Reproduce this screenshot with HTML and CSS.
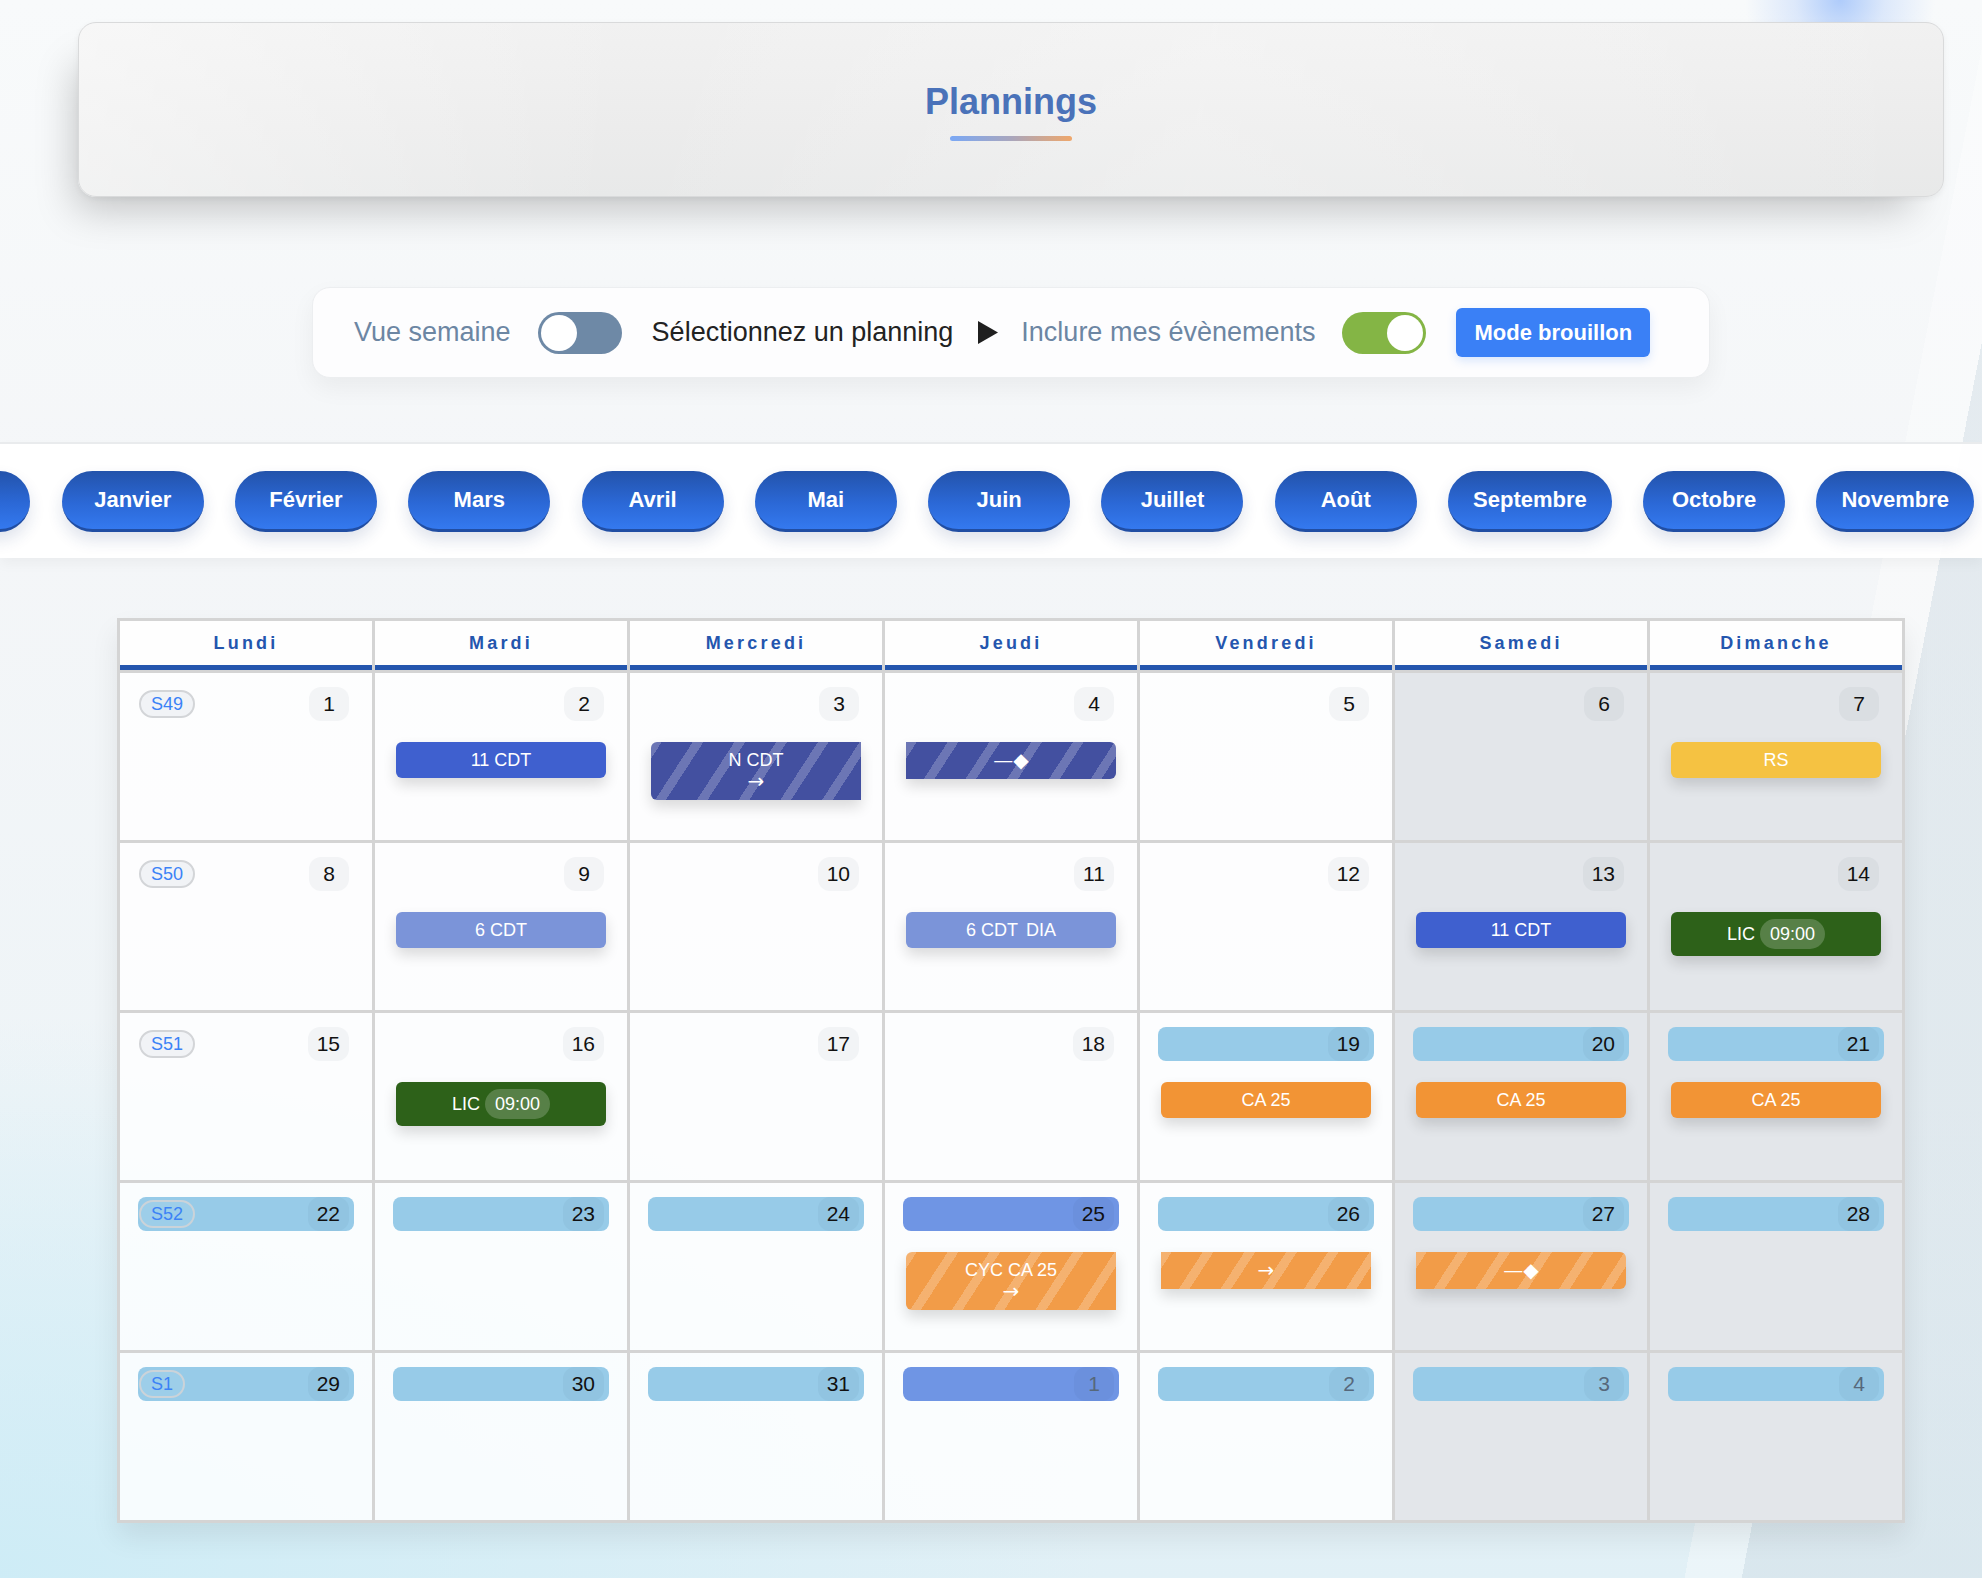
FILE: index.html
```html
<!DOCTYPE html>
<html lang="fr">
<head>
<meta charset="utf-8">
<title>Plannings</title>
<link rel="stylesheet" href="styles.css">
</head>
<body>
<div class="top">
  <header class="header-card">
    <h1 class="title">Plannings</h1>
    <div class="title-bar"></div>
  </header>
  <div class="controls">
    <span class="ctl-label">Vue semaine</span>
    <span class="toggle"></span>
    <span class="ctl-select">Sélectionnez un planning</span>
    <svg class="tri" width="20" height="23" viewBox="0 0 20 23"><polygon points="0,0 20,11.5 0,23" fill="#1f1f1f"/></svg>
    <span class="ctl-label">Inclure mes évènements</span>
    <span class="toggle on"></span>
    <button class="draft">Mode brouillon</button>
  </div>
</div>

<nav class="months">
  <div class="months-track">
    <span class="pill prev">Décembre</span>
    <span class="pill">Janvier</span>
    <span class="pill">Février</span>
    <span class="pill">Mars</span>
    <span class="pill">Avril</span>
    <span class="pill">Mai</span>
    <span class="pill">Juin</span>
    <span class="pill">Juillet</span>
    <span class="pill">Août</span>
    <span class="pill">Septembre</span>
    <span class="pill">Octobre</span>
    <span class="pill">Novembre</span>
    <span class="pill">Décembre</span>
  </div>
</nav>

<main class="cal-wrap">
  <div class="cal">
    <div class="dh">Lundi</div>
    <div class="dh">Mardi</div>
    <div class="dh">Mercredi</div>
    <div class="dh">Jeudi</div>
    <div class="dh">Vendredi</div>
    <div class="dh">Samedi</div>
    <div class="dh">Dimanche</div>

    <!-- Row 1 -->
    <div class="day"><div class="day-head"><span class="wk">S49</span><span class="num">1</span></div></div>
    <div class="day"><div class="day-head"><span class="num">2</span></div><div class="ev blue">11 CDT</div></div>
    <div class="day"><div class="day-head"><span class="num">3</span></div><div class="ev stripe-blue start">N CDT<br><span class="arr">→</span></div></div>
    <div class="day"><div class="day-head"><span class="num">4</span></div><div class="ev stripe-blue end"><span class="arr">—◆</span></div></div>
    <div class="day"><div class="day-head"><span class="num">5</span></div></div>
    <div class="day we"><div class="day-head"><span class="num">6</span></div></div>
    <div class="day we"><div class="day-head"><span class="num">7</span></div><div class="ev yellow">RS</div></div>

    <!-- Row 2 -->
    <div class="day"><div class="day-head"><span class="wk">S50</span><span class="num">8</span></div></div>
    <div class="day"><div class="day-head"><span class="num">9</span></div><div class="ev light">6 CDT</div></div>
    <div class="day"><div class="day-head"><span class="num">10</span></div></div>
    <div class="day"><div class="day-head"><span class="num">11</span></div><div class="ev light">6 CDT<span class="tag">DIA</span></div></div>
    <div class="day"><div class="day-head"><span class="num">12</span></div></div>
    <div class="day we"><div class="day-head"><span class="num">13</span></div><div class="ev blue">11 CDT</div></div>
    <div class="day we"><div class="day-head"><span class="num">14</span></div><div class="ev green lic">LIC<span class="time">09:00</span></div></div>

    <!-- Row 3 -->
    <div class="day"><div class="day-head"><span class="wk">S51</span><span class="num">15</span></div></div>
    <div class="day"><div class="day-head"><span class="num">16</span></div><div class="ev green lic">LIC<span class="time">09:00</span></div></div>
    <div class="day"><div class="day-head"><span class="num">17</span></div></div>
    <div class="day"><div class="day-head"><span class="num">18</span></div></div>
    <div class="day"><div class="day-head vac"><span class="num">19</span></div><div class="ev orange">CA 25</div></div>
    <div class="day we"><div class="day-head vac"><span class="num">20</span></div><div class="ev orange">CA 25</div></div>
    <div class="day we"><div class="day-head vac"><span class="num">21</span></div><div class="ev orange">CA 25</div></div>

    <!-- Row 4 -->
    <div class="day"><div class="day-head vac"><span class="wk">S52</span><span class="num">22</span></div></div>
    <div class="day"><div class="day-head vac"><span class="num">23</span></div></div>
    <div class="day"><div class="day-head vac"><span class="num">24</span></div></div>
    <div class="day"><div class="day-head hol"><span class="num">25</span></div><div class="ev stripe-orange start">CYC CA 25<br><span class="arr">→</span></div></div>
    <div class="day"><div class="day-head vac"><span class="num">26</span></div><div class="ev stripe-orange mid"><span class="arr">→</span></div></div>
    <div class="day we"><div class="day-head vac"><span class="num">27</span></div><div class="ev stripe-orange end"><span class="arr">—◆</span></div></div>
    <div class="day we"><div class="day-head vac"><span class="num">28</span></div></div>

    <!-- Row 5 -->
    <div class="day"><div class="day-head vac"><span class="wk">S1</span><span class="num">29</span></div></div>
    <div class="day"><div class="day-head vac"><span class="num">30</span></div></div>
    <div class="day"><div class="day-head vac"><span class="num">31</span></div></div>
    <div class="day"><div class="day-head hol"><span class="num other">1</span></div></div>
    <div class="day"><div class="day-head vac"><span class="num other">2</span></div></div>
    <div class="day we"><div class="day-head vac"><span class="num other">3</span></div></div>
    <div class="day we"><div class="day-head vac"><span class="num other">4</span></div></div>
  </div>
</main>
</body>
</html>
```
FILE: styles.css
```css
html, body {
  margin: 0;
  padding: 0;
}
body {
  width: 1982px;
  min-height: 1578px;
  overflow: hidden;
  font-family: "Liberation Sans", Arial, Helvetica, sans-serif;
  color: #111;
  background:
    radial-gradient(circle at 1840px 0px, rgba(150, 188, 250, 0.75) 0, rgba(170, 200, 250, 0.35) 45px, rgba(255, 255, 255, 0) 95px),
    linear-gradient(101deg, rgba(255,255,255,0) 0 87%, rgba(255,255,255,0.35) 87% 89.5%, rgba(208,220,228,0.45) 89.5% 100%),
    radial-gradient(ellipse 1100px 560px at 0% 100%, rgba(205, 236, 246, 0.95), rgba(205, 236, 246, 0) 100%),
    linear-gradient(180deg, #f8fafb 0%, #f4f6f8 35%, #eef4f7 70%, #e1f0f6 100%);
}

/* ---------- Top area ---------- */
.top {
  padding: 22px 38px 0 78px;
}
.header-card {
  box-sizing: border-box;
  height: 175px;
  border: 1px solid #d9dadb;
  border-radius: 18px;
  padding-top: 57px;
  text-align: center;
  background:
    linear-gradient(100deg, rgba(255,255,255,0.45) 0%, rgba(255,255,255,0) 30%, rgba(255,255,255,0.25) 60%, rgba(255,255,255,0) 100%),
    linear-gradient(180deg, #f1f1f1 0%, #ececec 60%, #e8e9e9 100%);
  box-shadow: -18px 28px 40px -16px rgba(0, 0, 0, 0.22), 0 2px 6px rgba(0, 0, 0, 0.05);
}
.title {
  margin: 0;
  font-size: 36px;
  line-height: 43px;
  font-weight: 700;
  color: #4a72b9;
}
.title-bar {
  width: 122px;
  height: 5px;
  margin: 13px auto 0;
  border-radius: 3px;
  background: linear-gradient(90deg, #7aa8f5 0%, #a9a6bd 50%, #efa76b 100%);
}

.controls {
  box-sizing: border-box;
  width: 1398px;
  height: 91px;
  margin: 90px auto 0;
  padding-left: 41px;
  display: flex;
  align-items: center;
  background: #fdfdfe;
  border: 1px solid #eceef0;
  border-radius: 18px;
  box-shadow: 0 10px 24px rgba(0, 0, 0, 0.05);
}
.ctl-label {
  font-size: 27px;
  color: #6c86a3;
}
.ctl-select {
  font-size: 27px;
  color: #222;
  margin-left: 30px;
}
.toggle {
  position: relative;
  width: 84px;
  height: 42px;
  border-radius: 21px;
  background: #6e89a6;
  margin-left: 27px;
  flex: none;
}
.toggle::after {
  content: "";
  position: absolute;
  top: 3px;
  left: 3px;
  width: 36px;
  height: 36px;
  border-radius: 50%;
  background: #fff;
}
.toggle.on {
  background: #84b545;
}
.toggle.on::after {
  left: 45px;
}
.tri {
  margin: 0 23px 0 25px;
  flex: none;
}
.draft {
  margin-left: 30px;
  height: 49px;
  padding: 0 18px;
  border: 0;
  border-radius: 6px;
  background: #3a80f6;
  color: #fff;
  font-family: inherit;
  font-size: 22px;
  font-weight: 700;
  box-shadow: 0 4px 10px rgba(58, 128, 246, 0.18);
}

/* ---------- Months ---------- */
.months {
  box-sizing: border-box;
  margin-top: 64px;
  height: 116px;
  background: rgba(255, 255, 255, 0.94);
  border-top: 2px solid #e9ebed;
  box-shadow: 0 6px 12px rgba(0, 0, 0, 0.04);
  overflow: hidden;
}
.months-track {
  display: flex;
  align-items: center;
  gap: 31.3px;
  height: 114px;
  margin-left: -138px;
}
.pill {
  flex: none;
  box-sizing: border-box;
  min-width: 142px;
  height: 61px;
  padding: 0 25px;
  border-radius: 31px;
  display: flex;
  align-items: center;
  justify-content: center;
  font-size: 22px;
  font-weight: 700;
  color: #fff;
  background: linear-gradient(180deg, #2353ab 0%, #2b68d6 55%, #3479ef 100%);
  border-bottom: 3px solid #214ea3;
  box-shadow: 0 8px 16px rgba(30, 60, 120, 0.14);
}
.pill.prev {
  padding-right: 37px;
}

/* ---------- Calendar ---------- */
.cal-wrap {
  margin-top: 60px;
  padding-left: 117px;
}
.cal {
  display: grid;
  grid-template-columns: repeat(7, 255px);
  width: 1788px;
  box-sizing: border-box;
  border-top: 3px solid #d4d4d4;
  border-left: 3px solid #d4d4d4;
  box-shadow: 0 14px 26px rgba(0, 0, 0, 0.08);
}
.dh {
  box-sizing: border-box;
  height: 52px;
  padding-bottom: 4px;
  border-right: 3px solid #d4d4d4;
  border-bottom: 3px solid #d4d4d4;
  background: #fefefe;
  box-shadow: inset 0 -5px 0 #2456ae;
  display: flex;
  align-items: center;
  justify-content: center;
  font-size: 18px;
  font-weight: 700;
  letter-spacing: 3.2px;
  color: #2456ae;
}
.day {
  box-sizing: border-box;
  height: 170px;
  padding: 14px 18px 0 18px;
  border-right: 3px solid #d4d4d4;
  border-bottom: 3px solid #d4d4d4;
  background: rgba(255, 255, 255, 0.82);
}
.day.we {
  background: #e3e6ea;
}
.day-head {
  display: flex;
  align-items: center;
  height: 34px;
  padding: 0 5px 0 1px;
  border-radius: 8px;
}
.day-head.vac {
  background: #97cbe8;
}
.day-head.hol {
  background: #6f95e4;
}
.wk {
  box-sizing: border-box;
  height: 28px;
  padding: 0 10px;
  border: 2px solid #d3d5d8;
  border-radius: 14px;
  background: #f1f3f6;
  color: #3b82f6;
  font-size: 18px;
  line-height: 24px;
}
.vac .wk {
  background: rgba(255, 255, 255, 0.06);
  border-color: #cbd3d9;
}
.num {
  margin-left: auto;
  box-sizing: border-box;
  min-width: 40px;
  height: 34px;
  padding: 0 9px;
  border-radius: 12px;
  background: rgba(30, 40, 60, 0.045);
  font-size: 21px;
  line-height: 34px;
  text-align: center;
  color: #111;
}
.num.other {
  color: #56687b;
}

.ev {
  margin: 21px 3px 0;
  padding: 7.5px 6px;
  border-radius: 6px;
  color: #fff;
  font-size: 18px;
  line-height: 21px;
  text-align: center;
  box-shadow: 0 7px 14px rgba(0, 0, 0, 0.14);
}
.ev .arr {
  font-family: "DejaVu Sans", sans-serif;
  font-size: 20px;
  line-height: 21px;
}
.ev.blue { background: #3f60cf; }
.ev.light { background: #7b94d9; }
.ev.yellow { background: #f5c242; }
.ev.orange { background: #f29435; }
.ev.green { background: #2d6119; }
.ev .tag { margin-left: 8px; }
.ev.lic {
  display: flex;
  align-items: center;
  justify-content: center;
  gap: 5px;
  padding: 7px 6px;
  line-height: 30px;
}
.time {
  height: 30px;
  padding: 0 10px;
  border-radius: 15px;
  background: rgba(255, 255, 255, 0.2);
}
.ev.stripe-blue {
  background: repeating-linear-gradient(123deg, rgba(255,255,255,0.22) 0 9px, rgba(255,255,255,0) 9px 35px), #4350a0;
}
.ev.stripe-orange {
  background: repeating-linear-gradient(123deg, rgba(255,255,255,0.22) 0 9px, rgba(255,255,255,0) 9px 35px), #f29c48;
}
.ev.start { border-radius: 6px 0 0 6px; }
.ev.mid { border-radius: 0; }
.ev.end { border-radius: 0 6px 6px 0; }
```
